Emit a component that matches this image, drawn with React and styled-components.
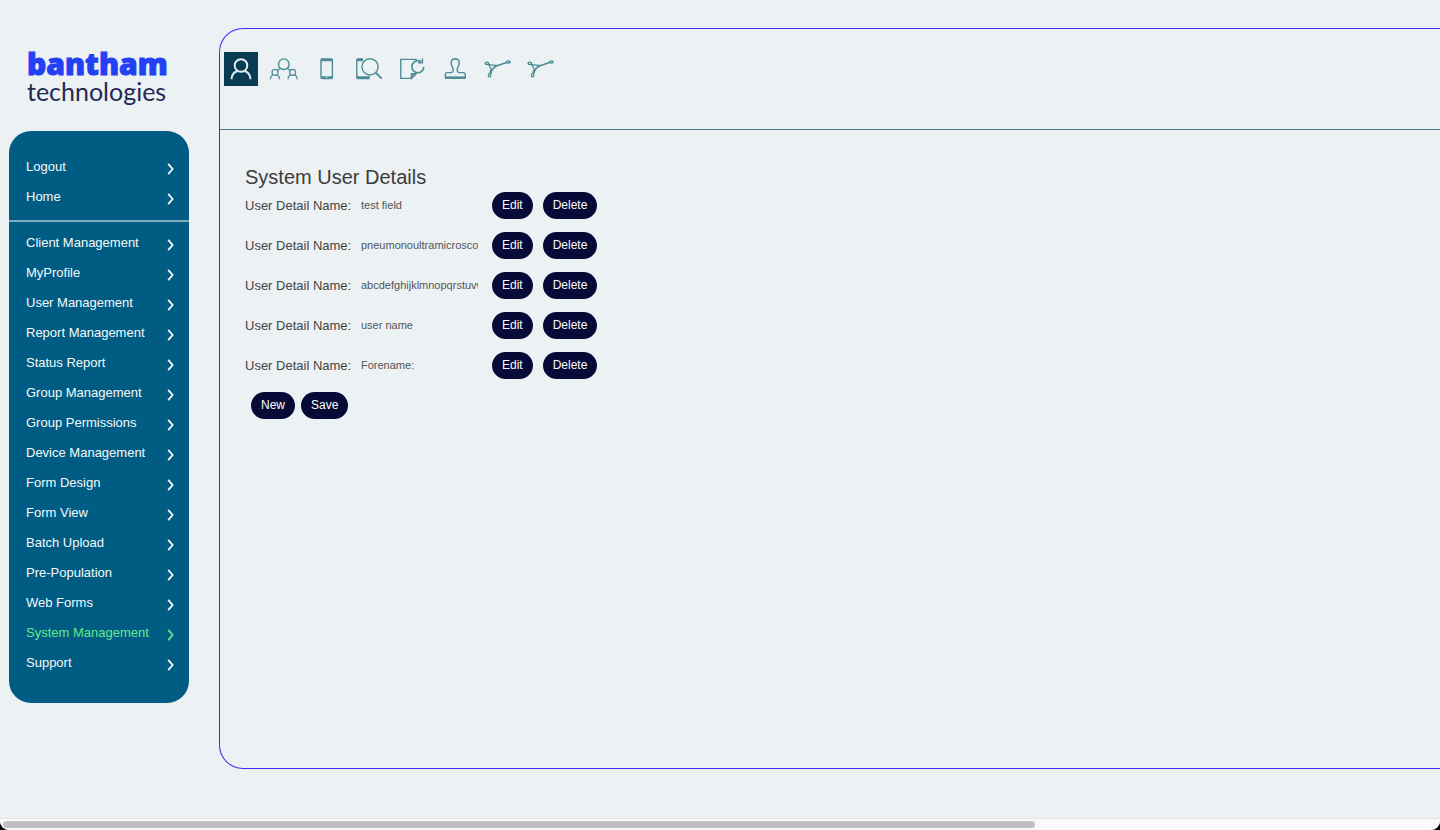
import React from "react";
import styled, { createGlobalStyle } from "styled-components";

const GlobalStyle = createGlobalStyle`
  *, *::before, *::after { box-sizing: border-box; }
  html, body { margin: 0; background: #04040c; }
  body { font-family: "Liberation Sans", Arial, sans-serif; font-size: 13px; color: #444; }
`;

const Window = styled.div`
  display: flex;
  flex-direction: column;
  min-height: 100vh;
  overflow: hidden;
  background: #ecf1f4;
  border-radius: 0 0 9px 9px;
`;

const Layout = styled.div`
  flex: 1;
  display: flex;
  gap: 30px;
  padding-left: 9px;
`;

const Sidebar = styled.aside`
  flex: 0 0 180px;
  padding-bottom: 49px;
`;

const Logo = styled.a`
  display: flex;
  flex-direction: column;
  height: 131px;
  padding: 47px 0 0 18px;
  text-decoration: none;
  white-space: nowrap;
`;

const Brand = styled.span`
  font: 800 30px/34px "Open Sans", sans-serif;
  color: #2440f5;
  -webkit-text-stroke: 1px #2440f5;
`;

const BrandSub = styled.span`
  font: 400 25px/20px Lato, sans-serif;
  color: #252a55;
`;

const Menu = styled.nav`
  padding: 21px 0 25px;
  border-radius: 22px;
  background: #005c82;
`;

const MenuGroup = styled.ul`
  list-style: none;
  margin: 0;
  padding: 0;

  & + & {
    margin-top: 8px;
    padding-top: 6px;
    border-top: 2px solid #7eacc0;
  }
`;

const MenuLink = styled.a`
  display: flex;
  align-items: center;
  justify-content: space-between;
  height: 30px;
  padding: 0 15px 2px 17px;
  color: ${(p) => (p.$active ? "#63e88d" : "#f4f9fb")};
  text-decoration: none;
  white-space: nowrap;

  svg { margin-top: 6px; }
`;

const Panel = styled.main`
  flex: 1;
  margin: 28px 0 49px;
  border: 1px solid #3a2df5;
  border-right: 0;
  border-radius: 24px 0 0 24px;
`;

const Toolbar = styled.div`
  display: flex;
  gap: 9px;
  height: 101px;
  padding: 23px 4px;
  border-bottom: 1px solid #468389;
`;

const ToolButton = styled.button`
  width: 34px;
  height: 34px;
  padding: 0;
  border: 0;
  background: ${(p) => (p.$active ? "#083d54" : "transparent")};
  color: ${(p) => (p.$active ? "#e6f0f4" : "#4d8c94")};
  cursor: pointer;

  svg { display: block; }
`;

const Details = styled.form`
  padding: 35px 25px;
`;

const Title = styled.h1`
  margin: 0 0 3px;
  font-size: 20px;
  line-height: 24px;
  font-weight: 400;
  color: #3c3c3c;
`;

const Row = styled.div`
  display: flex;
  align-items: center;
  height: 27px;
  margin-bottom: 13px;
`;

const FieldLabel = styled.label`
  width: 116px;
  line-height: 27px;
  white-space: nowrap;
`;

const FieldInput = styled.input`
  width: 117px;
  height: 27px;
  margin-right: 14px;
  padding: 0;
  border: 0;
  background: transparent;
  color: #555;
  font: 11px/27px "Liberation Sans", Arial, sans-serif;
`;

const Actions = styled.div`
  display: flex;
  gap: ${(p) => p.$gap}px;
  padding-left: ${(p) => p.$indent || 0}px;
`;

const Pill = styled.button`
  height: 27px;
  padding: 0 10px;
  border: 0;
  border-radius: 14px;
  background: #060a36;
  color: #fff;
  font: 12px/27px "Liberation Sans", Arial, sans-serif;
  cursor: pointer;
`;

const ScrollTrack = styled.div`
  height: 12px;
  padding: 2px 3px;
  border-top: 1px solid #e3e6e8;
  background: #fafafa;
`;

const ScrollThumb = styled.div`
  width: 72%;
  height: 7px;
  border-radius: 4px;
  background: #c0c0c0;
`;

const Chevron = () => (
  <svg width="7" height="12" viewBox="0 0 7 12" fill="none" stroke="currentColor" strokeWidth="1.8" aria-hidden="true">
    <path d="M1.2 0.8 L5.6 6 L1.2 11.2" />
  </svg>
);

const Icon = ({ children }) => (
  <svg width="34" height="34" viewBox="0 0 34 34" fill="none" stroke="currentColor" strokeWidth="1.4" aria-hidden="true">
    {children}
  </svg>
);

const network = (
  <Icon>
    <g strokeWidth="1.3">
      <ellipse cx="4.8" cy="11.3" rx="1.8" ry="1.2" />
      <ellipse cx="26.4" cy="9.9" rx="1.9" ry="1.1" />
      <ellipse cx="7.6" cy="23.2" rx="1.3" ry="1.6" />
      <path d="M6.4 12.2 L9 16.8 L8 21.5" />
      <path d="M24.6 10.6 L15 13.8 C11 15.4 9.6 17.5 8.7 21.6" strokeWidth="1.6" />
      <path d="M6.6 12.4 C9 13.2 11 13.4 15 13.4" />
    </g>
  </Icon>
);

const tools = [
  {
    label: "User",
    icon: (
      <Icon>
        <g strokeWidth="1.9">
          <circle cx="17" cy="13.5" r="6.3" />
          <path d="M7.6 27.2 C7.6 23.2 9.6 20.4 13.2 19 M26.4 27.2 C26.4 23.2 24.4 20.4 20.8 19" />
        </g>
      </Icon>
    ),
  },
  {
    label: "Users",
    icon: (
      <Icon>
        <circle cx="16.8" cy="12.2" r="5.3" />
        <path d="M13.4 16.4 C11.8 17 10.8 18 10.3 19.2 M20.2 16.4 C21.8 17 22.8 18 23.3 19.2" />
        <g strokeWidth="1.2">
          <circle cx="8" cy="20.3" r="3" />
          <circle cx="25.6" cy="20.3" r="3" />
          <path d="M3.4 27.2 C3.4 25 4.4 23.6 6.2 22.8 M12.6 27.2 C12.6 25 11.6 23.6 9.8 22.8" />
          <path d="M21 27.2 C21 25 22 23.6 23.8 22.8 M30.2 27.2 C30.2 25 29.2 23.6 27.4 22.8" />
        </g>
      </Icon>
    ),
  },
  {
    label: "Device",
    icon: (
      <Icon>
        <rect x="11" y="7" width="11.4" height="19.6" rx="1" />
        <path d="M11 8 H22.4 M11 25.4 H22.4" strokeWidth="2.4" />
        <circle cx="16.7" cy="25.3" r="0.7" fill="#ecf1f4" stroke="none" />
      </Icon>
    ),
  },
  {
    label: "Search device",
    icon: (
      <Icon>
        <path d="M10 7 H4.8 Q3.8 7 3.8 8 V25.6 Q3.8 26.6 4.8 26.6 H16 V23.4" />
        <path d="M4 8 H10 M4 25.4 H16" strokeWidth="2.4" />
        <circle cx="17" cy="14.8" r="8.1" />
        <path d="M22.8 20.6 L28.6 26.6" strokeWidth="2" />
      </Icon>
    ),
  },
  {
    label: "Update form",
    icon: (
      <Icon>
        <path d="M20 8.5 V7.4 H4.8 V26.4 H15.4 L20 21.8" />
        <path d="M15.4 26.4 V21.8 H20 Z" fill="currentColor" fillOpacity="0.5" />
        <path d="M24.9 9.6 A6 6 0 1 0 27.8 14.8" strokeWidth="1.7" />
        <path d="M22.2 10.8 H26.4 V6.4" strokeWidth="1.5" />
      </Icon>
    ),
  },
  {
    label: "Stamp",
    icon: (
      <Icon>
        <path d="M6.4 26 V22.4 Q6.4 20.6 8.2 20.6 H12.4 Q14.4 20.2 14.2 17.4 Q14 15.6 12.6 13.4 Q10.8 7 16.2 6.8 Q21.6 7 19.8 13.4 Q18.4 15.6 18.2 17.4 Q18 20.2 20 20.6 H24.4 Q26.2 20.6 26.2 22.4 V26 Z" />
        <path d="M6.4 25.6 H26.2" strokeWidth="2.4" />
      </Icon>
    ),
  },
  { label: "Workflow", icon: network },
  { label: "Network", icon: network },
];

const menuGroups = [
  ["Logout", "Home"],
  [
    "Client Management",
    "MyProfile",
    "User Management",
    "Report Management",
    "Status Report",
    "Group Management",
    "Group Permissions",
    "Device Management",
    "Form Design",
    "Form View",
    "Batch Upload",
    "Pre-Population",
    "Web Forms",
    "System Management",
    "Support",
  ],
];

const details = [
  "test field",
  "pneumonoultramicroscopic",
  "abcdefghijklmnopqrstuvwxyz",
  "user name",
  "Forename:",
];

export default function App() {
  return (
    <Window>
      <GlobalStyle />
      <Layout>
        <Sidebar>
          <Logo href="#home">
            <Brand>bantham</Brand>
            <BrandSub>technologies</BrandSub>
          </Logo>
          <Menu>
            {menuGroups.map((items) => (
              <MenuGroup key={items[0]}>
                {items.map((item) => (
                  <li key={item}>
                    <MenuLink href="#menu" $active={item === "System Management"}>
                      {item}
                      <Chevron />
                    </MenuLink>
                  </li>
                ))}
              </MenuGroup>
            ))}
          </Menu>
        </Sidebar>
        <Panel>
          <Toolbar>
            {tools.map((tool, i) => (
              <ToolButton key={tool.label} type="button" aria-label={tool.label} $active={i === 0}>
                {tool.icon}
              </ToolButton>
            ))}
          </Toolbar>
          <Details onSubmit={(e) => e.preventDefault()}>
            <Title>System User Details</Title>
            {details.map((value, i) => (
              <Row key={value}>
                <FieldLabel htmlFor={`detail-${i}`}>User Detail Name:</FieldLabel>
                <FieldInput id={`detail-${i}`} type="text" defaultValue={value} />
                <Actions $gap={10}>
                  <Pill type="button">Edit</Pill>
                  <Pill type="button">Delete</Pill>
                </Actions>
              </Row>
            ))}
            <Actions $gap={6} $indent={6}>
              <Pill type="button">New</Pill>
              <Pill type="submit">Save</Pill>
            </Actions>
          </Details>
        </Panel>
      </Layout>
      <ScrollTrack>
        <ScrollThumb />
      </ScrollTrack>
    </Window>
  );
}
